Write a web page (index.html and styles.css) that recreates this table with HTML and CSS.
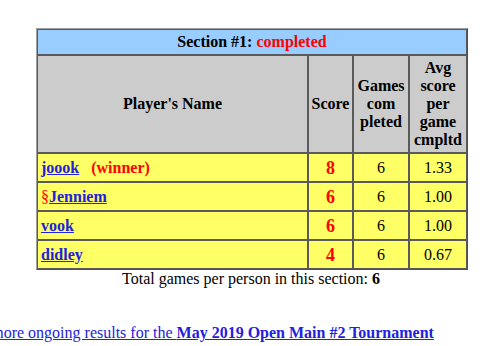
FILE: index.html
```html
<!DOCTYPE html>
<html>
<head>
<meta charset="utf-8">
<link rel="stylesheet" href="styles.css">
</head>
<body>
<div class="page">
  <table class="results">
    <colgroup>
      <col class="c-name"><col class="c-score"><col class="c-games"><col class="c-avg">
    </colgroup>
    <tr>
      <th colspan="4" class="title">Section #1: <span class="red">completed</span></th>
    </tr>
    <tr class="head">
      <th>Player's Name</th>
      <th>Score</th>
      <th>Games com pleted</th>
      <th>Avg score per game cmpltd</th>
    </tr>
    <tr>
      <td class="name"><a href="#">joook</a>&nbsp;&nbsp; <span class="red b">(winner)</span></td>
      <td class="score">8</td><td class="num">6</td><td class="num">1.33</td>
    </tr>
    <tr>
      <td class="name"><span class="red">§</span><a href="#">Jenniem</a></td>
      <td class="score">6</td><td class="num">6</td><td class="num">1.00</td>
    </tr>
    <tr>
      <td class="name"><a href="#">vook</a></td>
      <td class="score">6</td><td class="num">6</td><td class="num">1.00</td>
    </tr>
    <tr>
      <td class="name"><a href="#">didley</a></td>
      <td class="score">4</td><td class="num">6</td><td class="num">0.67</td>
    </tr>
  </table>
  <p class="total">Total games per person in this section: <b>6</b></p>
  <p class="more"><a href="#">For more ongoing results for the <b>May 2019 Open Main #2 Tournament</b></a></p>
  <p class="next"><a href="#">click here to view the standings</a></p>
</div>
</body>
</html>
```
FILE: styles.css
```css
html, body {
  margin: 0;
  padding: 0;
  background: #fff;
  overflow: hidden;
}
body {
  font-family: "Liberation Serif", "Times New Roman", serif;
  font-size: 16px;
  color: #000;
}
.page {
  padding-top: 28px;
}
.results {
  margin-left: 36px;
  width: 430px;
  table-layout: fixed;
  border-collapse: separate;
  border-spacing: 0;
  border: 1px solid;
  border-color: #a0a0a0 #505050 #505050 #a0a0a0;
}
.c-name { width: 271px; }
.c-score { width: 45px; }
.c-games { width: 56px; }
.c-avg { width: 58px; }
.results th,
.results td {
  border: 1px solid #5a5a5a;
}
.title {
  background: #99ccff;
  height: 24px;
  padding: 0;
  font-weight: bold;
}
.head th {
  background: #cccccc;
  padding: 3px 1px;
  line-height: 18px;
  font-weight: bold;
}
.results td {
  background: #ffff66;
  height: 27px;
  padding: 0 3px;
  line-height: 18px;
}
.results td.name { text-align: left; padding-left: 3px; }
.results td.num { text-align: center; }
.results td.score {
  text-align: center;
  color: #ff0000;
  font-weight: bold;
  font-size: 18px;
}
.name a {
  color: #2222dd;
  font-weight: bold;
}
.red { color: #ff0000; }
.b { font-weight: bold; }
.total {
  margin: 0;
  width: 502px;
  text-align: center;
  line-height: 18px;
}
.more {
  margin: 36px 0 0 -35px;
  white-space: nowrap;
  line-height: 18px;
}
.more a, .next a {
  color: #2222dd;
}
.next {
  margin: 3px 0 0 100px;
  white-space: nowrap;
  line-height: 18px;
}
```
